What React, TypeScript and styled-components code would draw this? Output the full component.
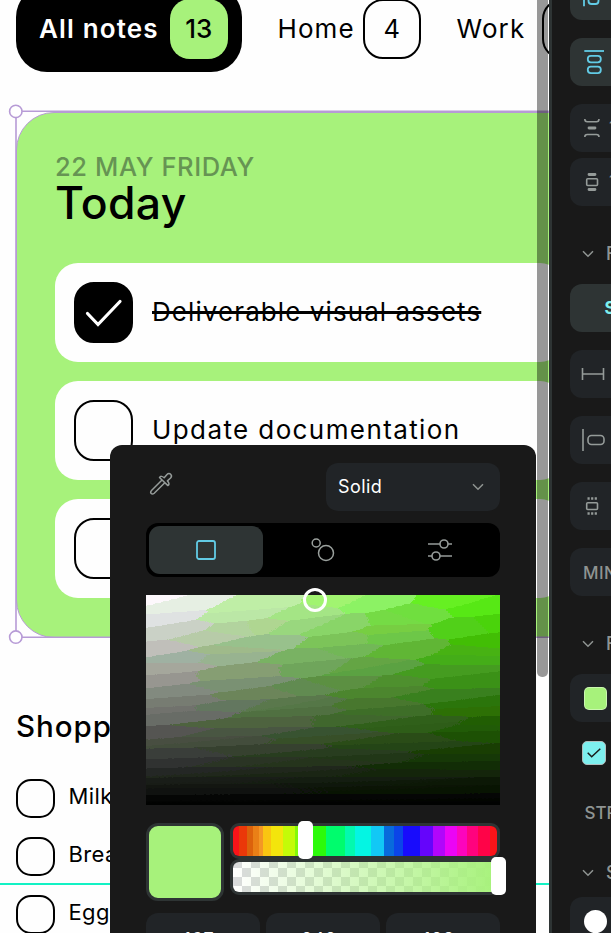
import React from "react";
import styled, { createGlobalStyle, css } from "styled-components";

const GlobalStyle = createGlobalStyle`
  * { box-sizing: border-box; }
  html, body { margin: 0; padding: 0; overflow: hidden; background: #fefefe; }
  body { font-family: Inter, "Liberation Sans", sans-serif; }
`;

const Shell = styled.div`
  display: grid;
  grid-template-columns: 549px 3px 59px;
  width: 611px;
  height: 933px;
  overflow: hidden;
`;

const Board = styled.main`
  position: relative;
  height: 933px;
  overflow: hidden;
  background: #fefefe;
  color: #000;
`;

const Divider = styled.div`
  background: #2e3434;
`;

const Label = styled.span<{ $size: number; $weight?: number; $track?: number; $line?: number; $color?: string }>`
  display: block;
  white-space: nowrap;
  font-size: ${(p) => p.$size}px;
  font-weight: ${(p) => p.$weight ?? 400};
  letter-spacing: ${(p) => p.$track ?? 0}px;
  line-height: ${(p) => p.$line ?? p.$size}px;
  color: ${(p) => p.$color ?? "inherit"};
`;

/* ---------- Filter row ---------- */

const Filters = styled.nav`
  display: flex;
  align-items: center;
  width: 760px;
  height: 86px;
  margin: -14px 0 0 16px;
`;

const Filter = styled.div<{ $active?: boolean }>`
  display: flex;
  flex: none;
  align-items: center;
  height: 86px;
  justify-content: space-between;
  ${(p) =>
    p.$active
      ? css`
          width: 226px;
          padding: 0 14px 0 23px;
          border-radius: 31px;
          background: #000;
          color: #fff;
        `
      : css`
          width: 143.5px;
          margin-left: 35.5px;
        `}
`;

const Count = styled.div<{ $filled?: boolean }>`
  display: grid;
  place-items: center;
  flex: none;
  width: 58.5px;
  height: 60px;
  border-radius: 20px;
  border: ${(p) => (p.$filled ? "0" : "2px solid #000")};
  background: ${(p) => (p.$filled ? "#a7f27b" : "transparent")};
  color: #000;
`;

/* ---------- Note card ---------- */

const NoteCard = styled.section`
  width: 586px;
  height: 526px;
  margin: 39.5px 0 0 16px;
  padding: 41px 40px 0 38px;
  border-radius: 38px;
  border: 1px solid #b79bd6;
  background: #a7f27b;
`;

const Tasks = styled.div`
  display: grid;
  gap: 19.3px;
  margin-top: 37.5px;
`;

const Task = styled.div`
  display: flex;
  align-items: center;
  gap: 19px;
  width: 508px;
  height: 98.7px;
  padding-left: 19px;
  border-radius: 23px;
  background: #fefefe;
`;

const TaskCheck = styled.div<{ $done?: boolean }>`
  display: grid;
  place-items: center;
  width: 59px;
  height: 60.5px;
  border: 2px solid #000;
  border-radius: 20px;
  background: ${(p) => (p.$done ? "#000" : "transparent")};
`;

const TaskText = styled(Label)<{ $done?: boolean }>`
  text-decoration: ${(p) => (p.$done ? "line-through 2.5px" : "none")};
`;

/* ---------- Shopping list ---------- */

const Shopping = styled.section`
  margin: 71px 0 0 16px;
`;

const ShopRows = styled.div`
  display: grid;
  gap: 19.3px;
  margin-top: 36px;
`;

const ShopRow = styled.div`
  display: flex;
  align-items: center;
  gap: 13.5px;
`;

const ShopCheck = styled.div`
  width: 39px;
  height: 39px;
  border: 2px solid #000;
  border-radius: 15px;
`;

const ShopText = styled(Label)`
  margin-top: -5px;
`;

/* ---------- Canvas overlays ---------- */

const SelectionFrame = styled.svg`
  position: absolute;
  left: 0;
  top: 100px;
`;

const Guide = styled.div`
  position: absolute;
  left: 0;
  right: 0;
  top: 883px;
  height: 2px;
  background: #12f2c4;
`;

const ScrollThumb = styled.div`
  position: absolute;
  left: 537px;
  top: -10px;
  width: 10.5px;
  height: 687px;
  border-radius: 5px;
  background: rgba(0, 0, 0, 0.4);
`;

/* ---------- Colour picker ---------- */

const Picker = styled.aside`
  position: absolute;
  left: 110px;
  top: 445px;
  width: 426px;
  height: 520px;
  padding: 18px 36px 0;
  border-radius: 12px;
  background: #191919;
  color: #fff;
`;

const PickerTop = styled.div`
  display: flex;
  align-items: center;
  justify-content: space-between;
  height: 48px;
`;

const Eyedropper = styled.svg`
  margin: -7px 0 0 3px;
`;

const Select = styled.div`
  display: flex;
  align-items: center;
  justify-content: space-between;
  width: 174px;
  height: 48px;
  padding: 0 16px 0 12px;
  border-radius: 12px;
  background: #212427;
`;

const Tabs = styled.div`
  display: grid;
  grid-template-columns: 114px 120px 114px;
  height: 54px;
  margin-top: 12px;
  padding: 3px;
  border-radius: 12px;
  background: #000;
`;

const Tab = styled.div<{ $active?: boolean }>`
  display: grid;
  place-items: center;
  border-radius: 11px;
  background: ${(p) => (p.$active ? "#2e3434" : "transparent")};
`;

const Field = styled.div`
  position: relative;
  width: 354px;
  height: 210px;
  margin-top: 18px;
`;

const FieldKnob = styled.div`
  position: absolute;
  left: 157px;
  top: -7px;
  width: 24px;
  height: 24px;
  border: 3px solid #fff;
  border-radius: 50%;
`;

const Mix = styled.div`
  display: grid;
  grid-template-columns: 78px 270px;
  gap: 6px;
  margin-top: 18px;
`;

const Swatch = styled.div`
  height: 78px;
  border: 3px solid #2e3434;
  border-radius: 12px;
  background: #a7f27b;
`;

const Track = styled.div`
  position: relative;
  display: flex;
  height: 36px;
  border: 3px solid #2e3434;
  border-radius: 9px;
`;

const HueStops = styled.div`
  flex: 1;
  border-radius: 6px;
  background: linear-gradient(
    90deg,
    #fa1419 0 6px, #eb3809 6px 14px, #dc620b 14px 20px, #ea8016 20px 26px, #f49725 26px 30px,
    #fac511 30px 38px, #f3e50c 38px 50px, #c4fb08 50px 62px, #83fa08 62px 66px, #2cfa0b 66px 93px,
    #00fc6d 93px 112px, #03f9ae 112px 122px, #04f5e3 122px 138px, #12c8f5 138px 151px, #086bdc 151px 161px,
    #0b45e8 161px 170px, #180cfc 170px 187px, #6505fb 187px 200px, #b206fb 200px 212px, #eb05f5 212px 224px,
    #fc05bd 224px 234px, #ff037e 234px 245px, #ff0348 245px 257px, #fb1419 257px
  );
`;

const AlphaRamp = styled.div`
  flex: 1;
  border-radius: 6px;
  background: linear-gradient(90deg, rgba(167, 242, 123, 0), #a7f27b),
    repeating-conic-gradient(#fff 0 25%, #dadbdd 0 50%) 0 -3px / 18px 18px;
`;

const Thumb = styled.div<{ $x: number }>`
  position: absolute;
  left: ${(p) => p.$x}px;
  top: -5px;
  width: 15px;
  height: 38px;
  border-radius: 5px;
  background: #fff;
`;

const Channels = styled.div`
  display: grid;
  grid-template-columns: repeat(3, 114px);
  gap: 6px;
  margin-top: 12px;
`;

const Channel = styled.div`
  display: grid;
  justify-content: center;
  height: 48px;
  padding: 16px 8px 0 0;
  border-radius: 12px;
  background: #212427;
`;

/* ---------- Inspector ---------- */

const Inspector = styled.aside`
  height: 933px;
  padding-left: 18px;
  overflow: hidden;
  background: #191919;
  color: #8f9492;
`;

const Control = styled.div<{ $top: number; $active?: boolean; $pad?: number }>`
  display: flex;
  align-items: center;
  gap: 5px;
  width: 120px;
  height: 48px;
  margin-top: ${(p) => p.$top}px;
  padding-left: ${(p) => p.$pad ?? 10}px;
  border-radius: 12px;
  background: ${(p) => (p.$active ? "#2e3434" : "#212427")};
`;

const ControlText = styled(Label)`
  padding-top: 2.5px;
`;

const Heading = styled.div<{ $top: number }>`
  display: flex;
  align-items: center;
  gap: 12px;
  width: 120px;
  height: 24px;
  margin-top: ${(p) => p.$top}px;
  padding-left: 12px;
`;

const StrokeLabel = styled(Label)`
  margin: 39px 0 0 14.5px;
`;

const Chip = styled.div<{ $round?: boolean; $color: string }>`
  width: 23px;
  height: 23px;
  margin-left: 3.5px;
  border-radius: ${(p) => (p.$round ? "50%" : "5px")};
  border: 1px solid rgba(254, 254, 254, 0.4);
  background: ${(p) => p.$color};
`;

const Toggle = styled.div`
  display: grid;
  place-items: center;
  width: 24px;
  height: 24px;
  margin: 19px 0 0 12px;
  border: 1px solid #b1bcbc;
  border-radius: 5px;
  background: #7defee;
`;

/* ---------- Drawings ---------- */

type RGB = [number, number, number];

const FIELD_W = 354;
const FIELD_H = 210;
const HUE: RGB = [84, 244, 4];

const shade = (s: number, v: number): RGB => [
  v * (255 + (HUE[0] - 255) * s),
  v * (255 + (HUE[1] - 255) * s),
  v * (255 + (HUE[2] - 255) * s),
];

/** Quantises the saturation/value square to a small palette and returns one path per colour. */
function quantisedField() {
  let seed = 41;
  const rand = () => {
    seed = (seed * 16807) % 2147483647;
    return seed / 2147483647;
  };
  const palette: RGB[] = [];
  for (let r = 0; r < 21; r++) {
    for (let c = 0; c < 5; c++) {
      const s = Math.min(1, Math.max(0, (c + 0.1 + rand() * 0.8) / 5));
      const v = Math.min(1, Math.max(0, 1 - (r + rand()) / 21));
      const p = shade(s, v);
      const warm = (rand() - 0.5) * 14 * v;
      palette.push([p[0] + warm, p[1] - Math.abs(warm) * 0.3, p[2] + (rand() - 0.4) * 18 * v]);
    }
  }
  const paths: string[] = palette.map(() => "");
  for (let y = 0; y < FIELD_H; y++) {
    let start = 0;
    let prev = -1;
    for (let x = 0; x <= FIELD_W; x++) {
      let best = -1;
      if (x < FIELD_W) {
        const c = shade(x / FIELD_W, 1 - y / (FIELD_H - 1));
        const grain = (((x >> 1) * 7 + (y >> 1) * 13) % 5) - 2;
        let dist = Infinity;
        for (let i = 0; i < palette.length; i++) {
          const q = palette[i];
          const dr = c[0] + grain * 0.3 - q[0];
          const dg = c[1] - q[1];
          const db = c[2] + grain * 0.3 - q[2];
          const d = dr * dr * 0.6 + dg * dg * 2.2 + db * db * 0.3;
          if (d < dist) {
            dist = d;
            best = i;
          }
        }
      }
      if (best !== prev) {
        if (prev >= 0) paths[prev] += `M${start} ${y}h${x - start}v1h${start - x}z`;
        start = x;
        prev = best;
      }
    }
  }
  return palette
    .map((p, i) => ({ d: paths[i], fill: `rgb(${p.map((n) => Math.max(0, Math.min(255, Math.round(n)))).join(",")})` }))
    .filter((p) => p.d);
}

const FIELD_CELLS = quantisedField();

const Chevron = () => (
  <svg width="12" height="8" viewBox="0 0 12 8" fill="none" stroke="#8f9492" strokeWidth="1.5">
    <path d="M1 1.3l5 5 5-5" />
  </svg>
);

const Glyph = ({ color = "#959b99", width = 1.6, children }: { color?: string; width?: number; children: React.ReactNode }) => (
  <svg width="24" height="24" viewBox="0 0 24 24" fill="none" stroke={color} strokeWidth={width}>
    {children}
  </svg>
);

export default function App() {
  return (
    <>
      <GlobalStyle />
      <Shell>
        <Board>
          <Filters>
            <Filter $active>
              <Label $size={26} $weight={570} $line={28} $track={1.15}>All notes</Label>
              <Count $filled><Label $size={26} $weight={500} $line={28}>13</Label></Count>
            </Filter>
            <Filter>
              <Label $size={26} $weight={430} $line={28} $track={1.1}>Home</Label>
              <Count><Label $size={25.5} $weight={430}>4</Label></Count>
            </Filter>
            <Filter>
              <Label $size={26} $weight={430} $line={28} $track={1.1}>Work</Label>
              <Count><Label $size={25.5} $weight={430}>6</Label></Count>
            </Filter>
          </Filters>

          <NoteCard>
            <Label $size={25.5} $line={26} $track={0.6} $weight={450} $color="#669453">22 MAY FRIDAY</Label>
            <Label $size={44.5} $weight={500} $line={46} $track={0.3}>Today</Label>
            <Tasks>
              <Task>
                <TaskCheck $done>
                  <svg width="40" height="34" viewBox="0 0 40 34" fill="none" stroke="#fff" strokeWidth="3.2" strokeLinecap="round">
                    <path d="M3.500 18.500l10.500 11L36 6.500" />
                  </svg>
                </TaskCheck>
                <TaskText $done $size={26} $line={28} $weight={430} $track={1.08}>Deliverable visual assets</TaskText>
              </Task>
              <Task>
                <TaskCheck />
                <TaskText $size={26} $line={28} $weight={430} $track={1.4}>Update documentation</TaskText>
              </Task>
              <Task>
                <TaskCheck />
                <TaskText $size={26} $line={28} $weight={430} $track={1}>Plan the week</TaskText>
              </Task>
            </Tasks>
          </NoteCard>

          <Shopping>
            <Label $size={29.5} $weight={500} $line={34} $track={1}>Shopping</Label>
            <ShopRows>
              {["Milk", "Bread", "Eggs"].map((name) => (
                <ShopRow key={name}>
                  <ShopCheck />
                  <ShopText $size={22} $track={0.4}>{name}</ShopText>
                </ShopRow>
              ))}
            </ShopRows>
          </Shopping>

          <Guide />
          <SelectionFrame width="549" height="550" viewBox="0 100 549 550" fill="none" stroke="#b79bd6" strokeWidth="1.6">
            <path d="M560 111.300H16V637.200H560" />
            <circle cx="15.800" cy="111.400" r="6.200" fill="#fff" />
            <circle cx="15.800" cy="637.100" r="6.200" fill="#fff" />
          </SelectionFrame>
          <ScrollThumb />

          <Picker>
            <PickerTop>
              <Eyedropper width="26" height="26" viewBox="0 0 26 26" fill="none" stroke="#959b99" strokeWidth="1.5" strokeLinejoin="round">
                <path d="M13 9L2.500 19.500c-2 2.300.3 4.800 2.700 2.700L15.800 11.800" />
                <path d="M10.500 6.500c.9-1.600 2.600-1.500 4.700.3L18 3.400c2.500-2.600 6 .8 3.600 3.600L18.400 9.900c2 2 2.100 4 .5 4.700z" />
              </Eyedropper>
              <Select>
                <Label $size={18} $track={0.45}>Solid</Label>
                <Chevron />
              </Select>
            </PickerTop>
            <Tabs>
              <Tab $active>
                <svg width="20" height="20" fill="none" stroke="#62cbe5" strokeWidth="1.8">
                  <rect x="1" y="1" width="18" height="18" rx="2" />
                </svg>
              </Tab>
              <Tab>
                <svg width="24" height="24" fill="none" stroke="#9aa09d" strokeWidth="1.5">
                  <circle cx="5.200" cy="5" r="4" />
                  <circle cx="15" cy="15" r="7.500" />
                </svg>
              </Tab>
              <Tab>
                <svg width="24" height="24" fill="none" stroke="#959b99" strokeWidth="1.600">
                  <path d="M0 6h12M20 6h4M0 18h4M12 18h12" />
                  <circle cx="16" cy="6" r="4" />
                  <circle cx="8" cy="18" r="4" />
                </svg>
              </Tab>
            </Tabs>
            <Field>
              <svg width={FIELD_W} height={FIELD_H} shapeRendering="crispEdges">
                {FIELD_CELLS.map((cell, i) => (
                  <path key={i} d={cell.d} fill={cell.fill} />
                ))}
              </svg>
              <FieldKnob />
            </Field>
            <Mix>
              <Swatch />
              <div>
                <Track><HueStops /><Thumb $x={65} /></Track>
                <Track><AlphaRamp /><Thumb $x={258} /></Track>
              </div>
            </Mix>
            <Channels>
              {["167", "242", "123"].map((value) => (
                <Channel key={value}><Label $size={18} $line={22} $track={0.8}>{value}</Label></Channel>
              ))}
            </Channels>
          </Picker>
        </Board>

        <Divider />

        <Inspector>
          <Control $top={-28} $active>
            <Glyph color="#62cbe5" width={1.8}><path d="M4 2v20.300" /><rect x="8.500" y="7" width="10" height="13" rx="3" /></Glyph>
          </Control>
          <Control $top={18} $active $pad={12}>
            <Glyph color="#62cbe5" width={1.8}><path d="M2.300 1H22" /><rect x="5.800" y="5.800" width="13" height="6.500" rx="3" /><rect x="5.800" y="16.600" width="13" height="6.500" rx="3" /></Glyph>
          </Control>
          <Control $top={18}>
            <Glyph><path d="M4.800 3c0 2 .7 2.800 2.500 2.800h9.200c1.800 0 2.500-.8 2.500-2.800M4.800 21c0-2 .7-2.500 2.500-2.500h9.200c1.800 0 2.500.5 2.500 2.500" /><path d="M9 12h6" strokeWidth="2.800" strokeLinecap="round" /></Glyph>
            <Label $size={18}>10</Label>
          </Control>
          <Control $top={6}>
            <Glyph><rect x="6.700" y="8.700" width="10.800" height="6.800" rx="1" /><path d="M9 4.500h6M9 19.500h6" strokeWidth="2.800" strokeLinecap="round" /></Glyph>
            <Label $size={18}>10</Label>
          </Control>
          <Heading $top={36}><Chevron /><Label $size={18} $weight={550}>FLEX</Label></Heading>
          <Control $top={18} $active $pad={34.5}><Label $size={17} $weight={700} $color="#7defee">Size</Label></Control>
          <Control $top={18} $pad={11}><Glyph><path d="M1.500 6v12M22.500 6v12M1.500 12h21" /></Glyph></Control>
          <Control $top={18} $pad={11}><Glyph><path d="M2 1v22" /><rect x="7" y="7.500" width="16" height="9" rx="3.500" /></Glyph></Control>
          <Control $top={18}>
            <Glyph><rect x="6.700" y="8.700" width="10.800" height="6.800" rx="1" /><path d="M7.500 4.500h9.400M7.500 19.500h9.400" strokeWidth="2.400" strokeDasharray="2.200 1.400" /></Glyph>
          </Control>
          <Control $top={18} $pad={13}><ControlText $size={17} $weight={550} $track={0.4}>MIN W</ControlText></Control>
          <Heading $top={36}><Chevron /><Label $size={18} $weight={550}>FILL</Label></Heading>
          <Control $top={18}><Chip $color="#a7f27b" /></Control>
          <Toggle>
            <svg width="14" height="10" fill="none" stroke="#191919" strokeWidth="1.5"><path d="M.7 4.800l4 4L13.300.8" /></svg>
          </Toggle>
          <StrokeLabel $size={17} $line={18} $weight={500}>STROKE</StrokeLabel>
          <Heading $top={39}><Chevron /><Label $size={18} $weight={550}>STROKE</Label></Heading>
          <Control $top={12}><Chip $round $color="#fff" /></Control>
        </Inspector>
      </Shell>
    </>
  );
}
